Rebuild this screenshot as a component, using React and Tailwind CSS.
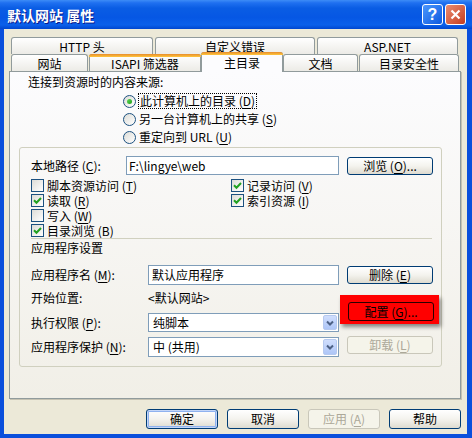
import React from 'react';

const ui="font-['Noto_Sans_CJK_SC',sans-serif] text-[12px] leading-[14px] text-black";

const Mn=({t,k,tail=''})=> (
  <>{t} (<u className="underline-offset-2">{k}</u>){tail}</>
);

const Btn=({children,className='',def=false,disabled=false})=> (
  <div
    className={`flex items-center justify-center rounded-[3px] border ${
      disabled
        ? 'border-[#c9c7ba] bg-[#f5f4ea] text-[#aca899]'
        : 'border-[#003c74] bg-linear-to-b from-[#ffffff] via-[#f4f3ee] to-[#dedbd0] text-black'
    } ${def ? 'shadow-[inset_0_0_0_1px_#c3d6f8,inset_0_0_0_2px_#8fb2ef]' : ''} ${className}`}
  >
    {children}
  </div>
);

const Check=({on})=> (
  <div className="w-[13px] h-[13px] border border-[#1c5180] bg-linear-to-br from-[#dcdcd7] to-white flex items-center justify-center">
    {on && (
      <svg width="9" height="9" viewBox="0 0 9 9">
        <path d="M1 4.2 L3.5 6.7 L8 2" fill="none" stroke="#21a121" strokeWidth="2" />
      </svg>
    )}
  </div>
);

const Radio=({on})=> (
  <div className="w-[13px] h-[13px] rounded-full border border-[#1c5180] bg-linear-to-br from-[#dcdcd7] to-white flex items-center justify-center">
    {on && <div className="w-[5px] h-[5px] rounded-full bg-linear-to-br from-[#5fd85b] to-[#119f0d]" />}
  </div>
);

const Select=({value,className=''})=> (
  <div className={`w-[191px] border border-[#7f9db9] bg-white flex items-center ${className}`}>
    <span className="flex-1 pl-[4px]">{value}</span>
    <div className="w-[16px] h-full p-px">
      <div className="w-full h-full rounded-[2px] border border-[#b6c9ef] bg-linear-to-b from-[#d0defd] to-[#aec6f7] flex items-center justify-center">
        <svg width="8" height="6" viewBox="0 0 8 6">
          <path d="M1 1.5 L4 4.5 L7 1.5" fill="none" stroke="#4d6185" strokeWidth="2" />
        </svg>
      </div>
    </div>
  </div>
);

const Tab=({children,w,hover=false})=> (
  <div className={`relative h-full ${w} flex items-center justify-center pt-[1px] rounded-t-[3px] border border-b-0 border-[#919b9c] bg-linear-to-b from-white to-[#ecebe6]`}>
    {hover && <div className="absolute -top-px -left-px -right-px h-[3px] rounded-t-[3px] bg-linear-to-b from-[#e68b2c] to-[#ffc73c]" />}
    {children}
  </div>
);

const App=()=> {
  return (
    <div className={`w-[472px] h-[438px] flex flex-col bg-[#0a4fdc] ${ui}`}>
      {/* title bar */}
      <div className="h-[29px] flex items-center pl-[7px] pr-[6px] bg-[linear-gradient(180deg,#3d8cf7_0%,#1f70f0_10%,#0a5de4_28%,#0657e4_60%,#0b60ea_86%,#0046cf_100%)]">
        <span className="flex-1 text-white font-bold text-[14px] leading-[16px] [text-shadow:1px_1px_0_#0a1c8a]">默认网站 属性</span>
        <div className="w-[21px] h-[21px] rounded-[3px] border border-white bg-linear-to-br from-[#4b97fd] to-[#0b58df] flex items-center justify-center text-white font-bold text-[16px] leading-[16px] font-['Liberation_Sans',sans-serif]">?</div>
        <div className="ml-[2px] w-[21px] h-[21px] rounded-[3px] border border-white bg-linear-to-br from-[#ea8c70] to-[#c33a1c] flex items-center justify-center">
          <svg width="11" height="11" viewBox="0 0 11 11">
            <path d="M1.5 1.5 L9.5 9.5 M9.5 1.5 L1.5 9.5" stroke="white" strokeWidth="2.2" />
          </svg>
        </div>
      </div>

      {/* client */}
      <div className="flex-1 ml-[4px] mr-[5px] mb-[4px] bg-[#ece9d8] flex flex-col">
        <div className="pt-[8px] pl-[7px]">
          <div className="flex gap-[2px] h-[17px]">
            <Tab w="w-[142px]">HTTP 头</Tab>
            <Tab w="w-[160px]">自定义错误</Tab>
            <Tab w="w-[141px]">ASP.NET</Tab>
          </div>
          <div className="flex items-end h-[17px]">
            <Tab w="w-[77px]">网站</Tab>
            <div className="ml-px h-full"><Tab w="w-[112px]" hover>ISAPI 筛选器</Tab></div>
            <div className="relative z-10 w-[82px] h-[20px] -mb-px rounded-t-[3px] border border-b-0 border-[#919b9c] bg-[#fcfcfe] flex items-center justify-center">
              <div className="absolute -top-px -left-px -right-px h-[3px] rounded-t-[3px] bg-linear-to-b from-[#e68b2c] to-[#ffc73c]" />
              主目录
            </div>
            <Tab w="w-[75px]">文档</Tab>
            <div className="ml-px h-full"><Tab w="w-[100px]">目录安全性</Tab></div>
          </div>
        </div>

        {/* tab page */}
        <div className="ml-[5px] w-[452px] h-[328px] border border-[#919b9c] shadow-[1px_1px_0_#c5c2b2] bg-linear-to-b from-[#fcfcfe] to-[#f1efe7] flex flex-col">
          <div className="ml-[18px] mt-[3px]">连接到资源时的内容来源:</div>
          <div className="ml-[113px] mt-[3px] flex flex-col">
            <div className="h-[18px] flex items-center gap-[2px]">
              <Radio on />
              <span className="border border-dotted border-black px-px">此计算机上的目录<Mn t="" k="D" /></span>
            </div>
            <div className="h-[18px] flex items-center gap-[3px]">
              <Radio />
              <span><Mn t="另一台计算机上的共享" k="S" /></span>
            </div>
            <div className="h-[18px] flex items-center gap-[3px]">
              <Radio />
              <span><Mn t="重定向到 URL" k="U" /></span>
            </div>
          </div>

          {/* group */}
          <div className="relative ml-[9px] mt-[1px] w-[423px] h-[220px] rounded-[3px] border border-[#d0d0bf] flex flex-col">
            <div className="mt-[8px] pl-[11px] h-[19px] flex items-center">
              <span className="w-[95px]"><Mn t="本地路径" k="C" tail=":" /></span>
              <div className="w-[213px] h-[19px] border border-[#7f9db9] bg-white flex items-center pl-[2px]">F:\lingye\web</div>
              <Btn className="ml-[8px] w-[86px] h-[18px]"><Mn t="浏览" k="O" tail="..." /></Btn>
            </div>

            <div className="mt-[3px] pl-[11px] flex">
              <div className="w-[200px] flex flex-col">
                <div className="h-[15px] flex items-center gap-[3px]"><Check /><span><Mn t="脚本资源访问" k="T" /></span></div>
                <div className="h-[15px] flex items-center gap-[3px]"><Check on /><span><Mn t="读取" k="R" /></span></div>
                <div className="h-[15px] flex items-center gap-[3px]"><Check /><span><Mn t="写入" k="W" /></span></div>
                <div className="h-[15px] flex items-center gap-[3px]"><Check on /><span><Mn t="目录浏览" k="B" /></span></div>
              </div>
              <div className="flex flex-col">
                <div className="h-[15px] flex items-center gap-[3px]"><Check on /><span><Mn t="记录访问" k="V" /></span></div>
                <div className="h-[15px] flex items-center gap-[3px]"><Check on /><span><Mn t="索引资源" k="I" /></span></div>
              </div>
            </div>

            <div className="ml-[11px] w-[401px] h-px bg-[#d0d0bf]" />
            <div className="mt-[2px] pl-[11px]">应用程序设置</div>

            <div className="mt-[10px] pl-[11px] h-[20px] flex items-center">
              <span className="w-[117px]"><Mn t="应用程序名" k="M" tail=":" /></span>
              <div className="w-[191px] h-[20px] border border-[#7f9db9] bg-white flex items-center pl-[3px]">默认应用程序</div>
              <Btn className="ml-[8px] w-[86px] h-[18px]"><Mn t="删除" k="E" /></Btn>
            </div>
            <div className="mt-[4px] pl-[11px] h-[18px] flex items-center">
              <span className="w-[117px]">开始位置:</span>
              <span>&lt;默认网站&gt;</span>
            </div>
            <div className="mt-[6px] pl-[11px] h-[19px] flex items-center">
              <span className="w-[117px]"><Mn t="执行权限" k="P" tail=":" /></span>
              <Select value="纯脚本" className="h-[19px]" />
            </div>
            <div className="mt-[5px] pl-[11px] h-[20px] flex items-center">
              <span className="w-[117px]"><Mn t="应用程序保护" k="N" tail=":" /></span>
              <Select value="中 (共用)" className="h-[20px]" />
              <Btn disabled className="ml-[8px] -mt-[4px] w-[86px] h-[18px]"><Mn t="卸载" k="L" /></Btn>
            </div>

            {/* red highlight around the configure button */}
            <div className="absolute left-[320px] top-[147px] w-[99px] h-[29px] bg-[#ff0000] shadow-[2px_3px_4px_rgba(0,0,0,0.45)] pl-[8px] pt-[7px]">
              <div className="w-[86px] h-[19px] rounded-[3px] border border-[#2a0000] bg-[#ff0000] flex items-center justify-center">
                <Mn t="配置" k="G" tail="..." />
              </div>
            </div>
          </div>
        </div>

        {/* dialog buttons */}
        <div className="mt-[10px] pr-[6px] flex justify-end gap-[9px]">
          <Btn def className="w-[72px] h-[20px]">确定</Btn>
          <Btn className="w-[72px] h-[20px]">取消</Btn>
          <Btn disabled className="w-[72px] h-[20px]"><Mn t="应用" k="A" /></Btn>
          <Btn className="w-[72px] h-[20px]">帮助</Btn>
        </div>
      </div>
    </div>
  );
};

export default App;
